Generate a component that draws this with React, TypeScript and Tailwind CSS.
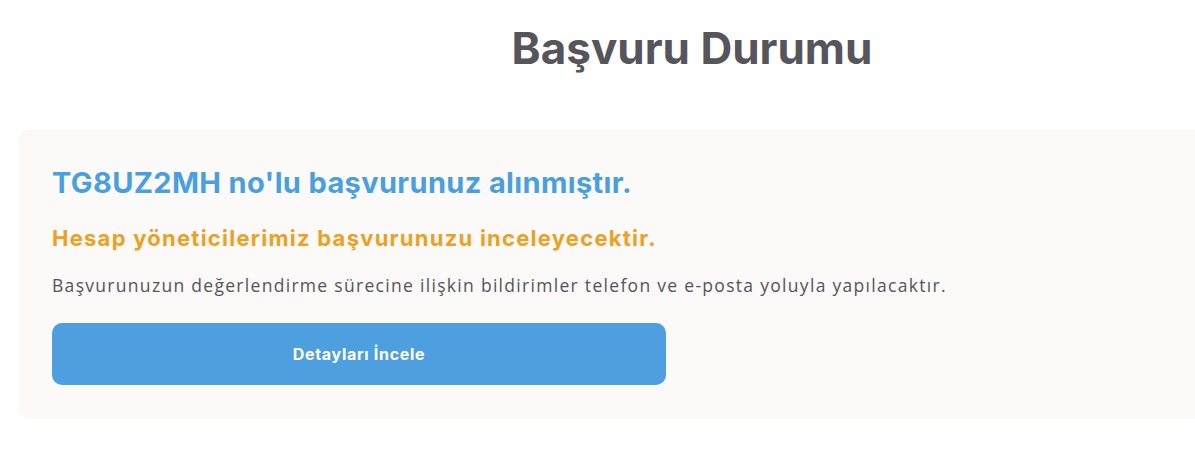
export default function App() {
  return (
    <div className="h-[458px] w-[1195px] overflow-hidden bg-white">
      <div className="ml-[18px] w-[1348px]">
        <h1 className="pt-[22px] text-center font-['Inter',sans-serif] text-[44px] font-bold leading-[52px] text-[#56555b]">
          Başvuru Durumu
        </h1>

        <div className="mt-[56px] rounded-[10px] bg-[#fbfaf9] px-[34px] pb-[34px] pt-[35px]">
          <h2 className="font-['Inter',sans-serif] text-[29px] font-bold leading-[36px] tracking-[0.35px] text-[#4a9fdf]">
            TG8UZ2MH no'lu başvurunuz alınmıştır.
          </h2>
          <h3 className="mt-[23px] font-['Inter',sans-serif] text-[22px] font-bold leading-[28px] tracking-[1.25px] text-[#eda021]">
            Hesap yöneticilerimiz başvurunuzu inceleyecektir.
          </h3>
          <p className="mt-[21px] font-['Open_Sans',sans-serif] text-[17.5px] leading-[24px] tracking-[1.3px] text-[#55545a]">
            Başvurunuzun değerlendirme sürecine ilişkin bildirimler telefon ve e-posta yoluyla yapılacaktır.
          </p>
          <button className="mt-[26px] flex h-[62px] w-[614px] items-center justify-center rounded-[10px] bg-[#4d9fdf] font-['Inter',sans-serif] text-[16px] font-bold tracking-[0.7px] text-white">
            Detayları İncele
          </button>
        </div>
      </div>
    </div>
  )
}
